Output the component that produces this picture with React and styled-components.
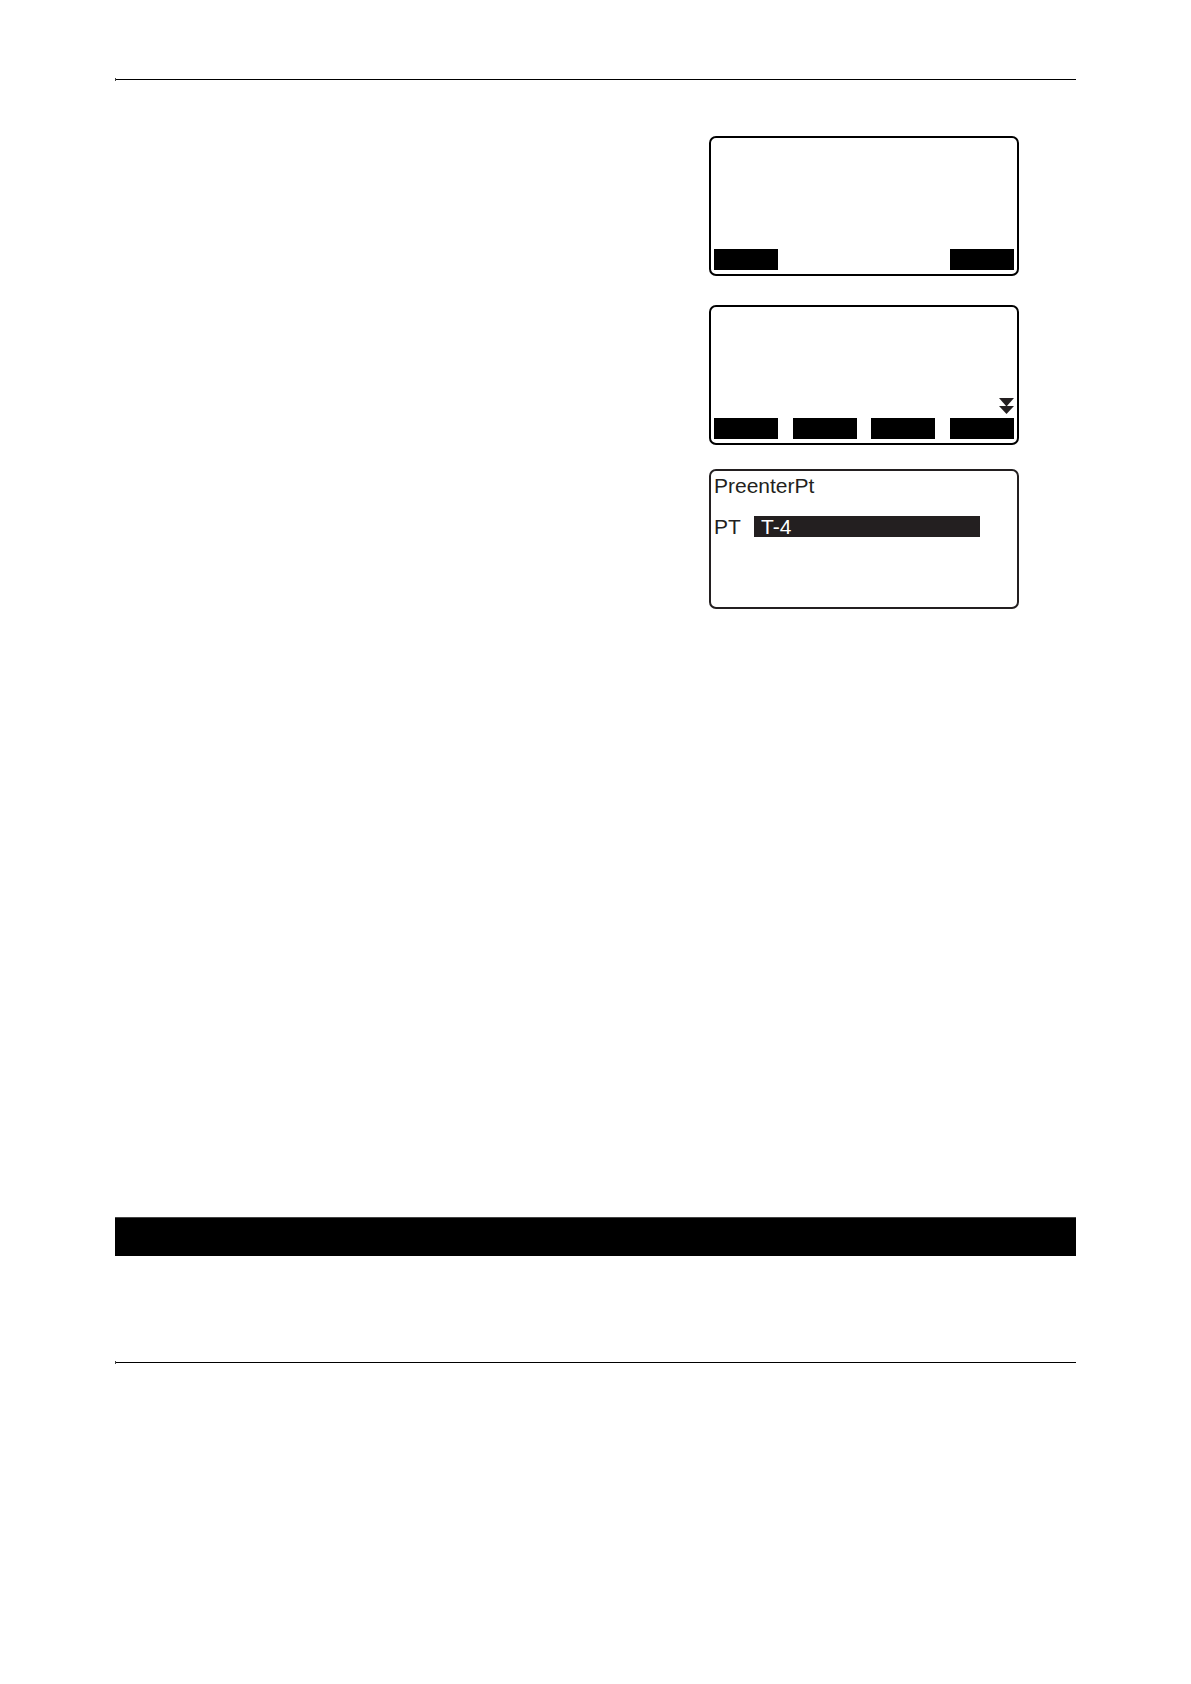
import React, { useState } from "react";
import styled, { createGlobalStyle } from "styled-components";

const GlobalStyle = createGlobalStyle`
    * {
        box-sizing: border-box;
    }

    body {
        margin: 0;
        background: #ffffff;
        font-family: "Liberation Sans", Arial, sans-serif;
    }
`;

const Page = styled.main`
    display: flex;
    flex-direction: column;
    min-height: 100vh;
    padding: 78px 115px 160px;
`;

const Rule = styled.hr`
    width: 100%;
    height: 3px;
    margin: 0;
    border: 0;
    border-left: 1px solid #444444;
    background: linear-gradient(#000000, #000000) center / 100% 1px no-repeat;
`;

const ScreenList = styled.section`
    display: flex;
    flex-direction: column;
    align-items: flex-end;
    padding: 55px 57px 608px 0;
`;

const Screen = styled.div`
    display: flex;
    flex-direction: column;
    width: 100%;
    max-width: 310px;
    min-height: 140px;
    margin-top: ${props => props.$gap || 0}px;
    padding: 3px 3px 4px;
    border: 2px solid ${props => props.$color || "#000000"};
    border-radius: 7px;
    color: #231f20;
`;

const ScrollHint = styled.svg`
    align-self: flex-end;
    width: 15px;
    height: 16px;
    margin-top: auto;
    fill: #231f20;
`;

const SoftKeys = styled.div`
    display: flex;
    justify-content: space-between;
    margin-top: ${props => (props.$below ? "4px" : "auto")};
`;

const SoftKey = styled.button`
    width: 64px;
    height: 21px;
    padding: 0;
    border: 0;
    background: #000000;
    cursor: pointer;
`;

const ScreenTitle = styled.h2`
    margin: 0 0 18px;
    font-size: 21px;
    font-weight: 400;
    line-height: 24px;
`;

const FieldRow = styled.div`
    display: grid;
    grid-template-columns: 40px 1fr;
    align-items: center;
    padding-right: 34px;
`;

const FieldLabel = styled.label`
    font-size: 21px;
    line-height: 21px;
`;

const FieldInput = styled.input`
    width: 100%;
    height: 21px;
    padding: 0 7px;
    border: 0;
    border-radius: 0;
    background: #231f20;
    color: #ffffff;
    font-family: inherit;
    font-size: 21px;
    line-height: 21px;
    outline: none;
`;

const SectionBar = styled.div`
    height: 39px;
    margin-bottom: 105px;
    border-top: 1px solid #444444;
    background: #000000;
`;

const SoftKeyRow = ({ keys, below }) => (
    <SoftKeys $below={below}>
        {keys.map((key) => (
            <SoftKey key={key} type="button" aria-label={key} />
        ))}
    </SoftKeys>
);

const App = () => {
    const [point, setPoint] = useState("T-4");

    return (
        <>
            <GlobalStyle />
            <Page>
                <Rule />
                <ScreenList>
                    <Screen>
                        <SoftKeyRow keys={["F1", "F4"]} />
                    </Screen>
                    <Screen $gap={29}>
                        <ScrollHint viewBox="0 0 15 16" aria-hidden="true">
                            <path d="M0 0H15L7.5 8.5Z" />
                            <path d="M0 8H15L7.5 16Z" />
                        </ScrollHint>
                        <SoftKeyRow below keys={["F1", "F2", "F3", "F4"]} />
                    </Screen>
                    <Screen $gap={24} $color="#231f20">
                        <ScreenTitle>PreenterPt</ScreenTitle>
                        <FieldRow>
                            <FieldLabel htmlFor="pt">PT</FieldLabel>
                            <FieldInput id="pt" value={point} onChange={(e) => setPoint(e.target.value)} />
                        </FieldRow>
                    </Screen>
                </ScreenList>
                <SectionBar />
                <Rule />
            </Page>
        </>
    );
};

export default App;
